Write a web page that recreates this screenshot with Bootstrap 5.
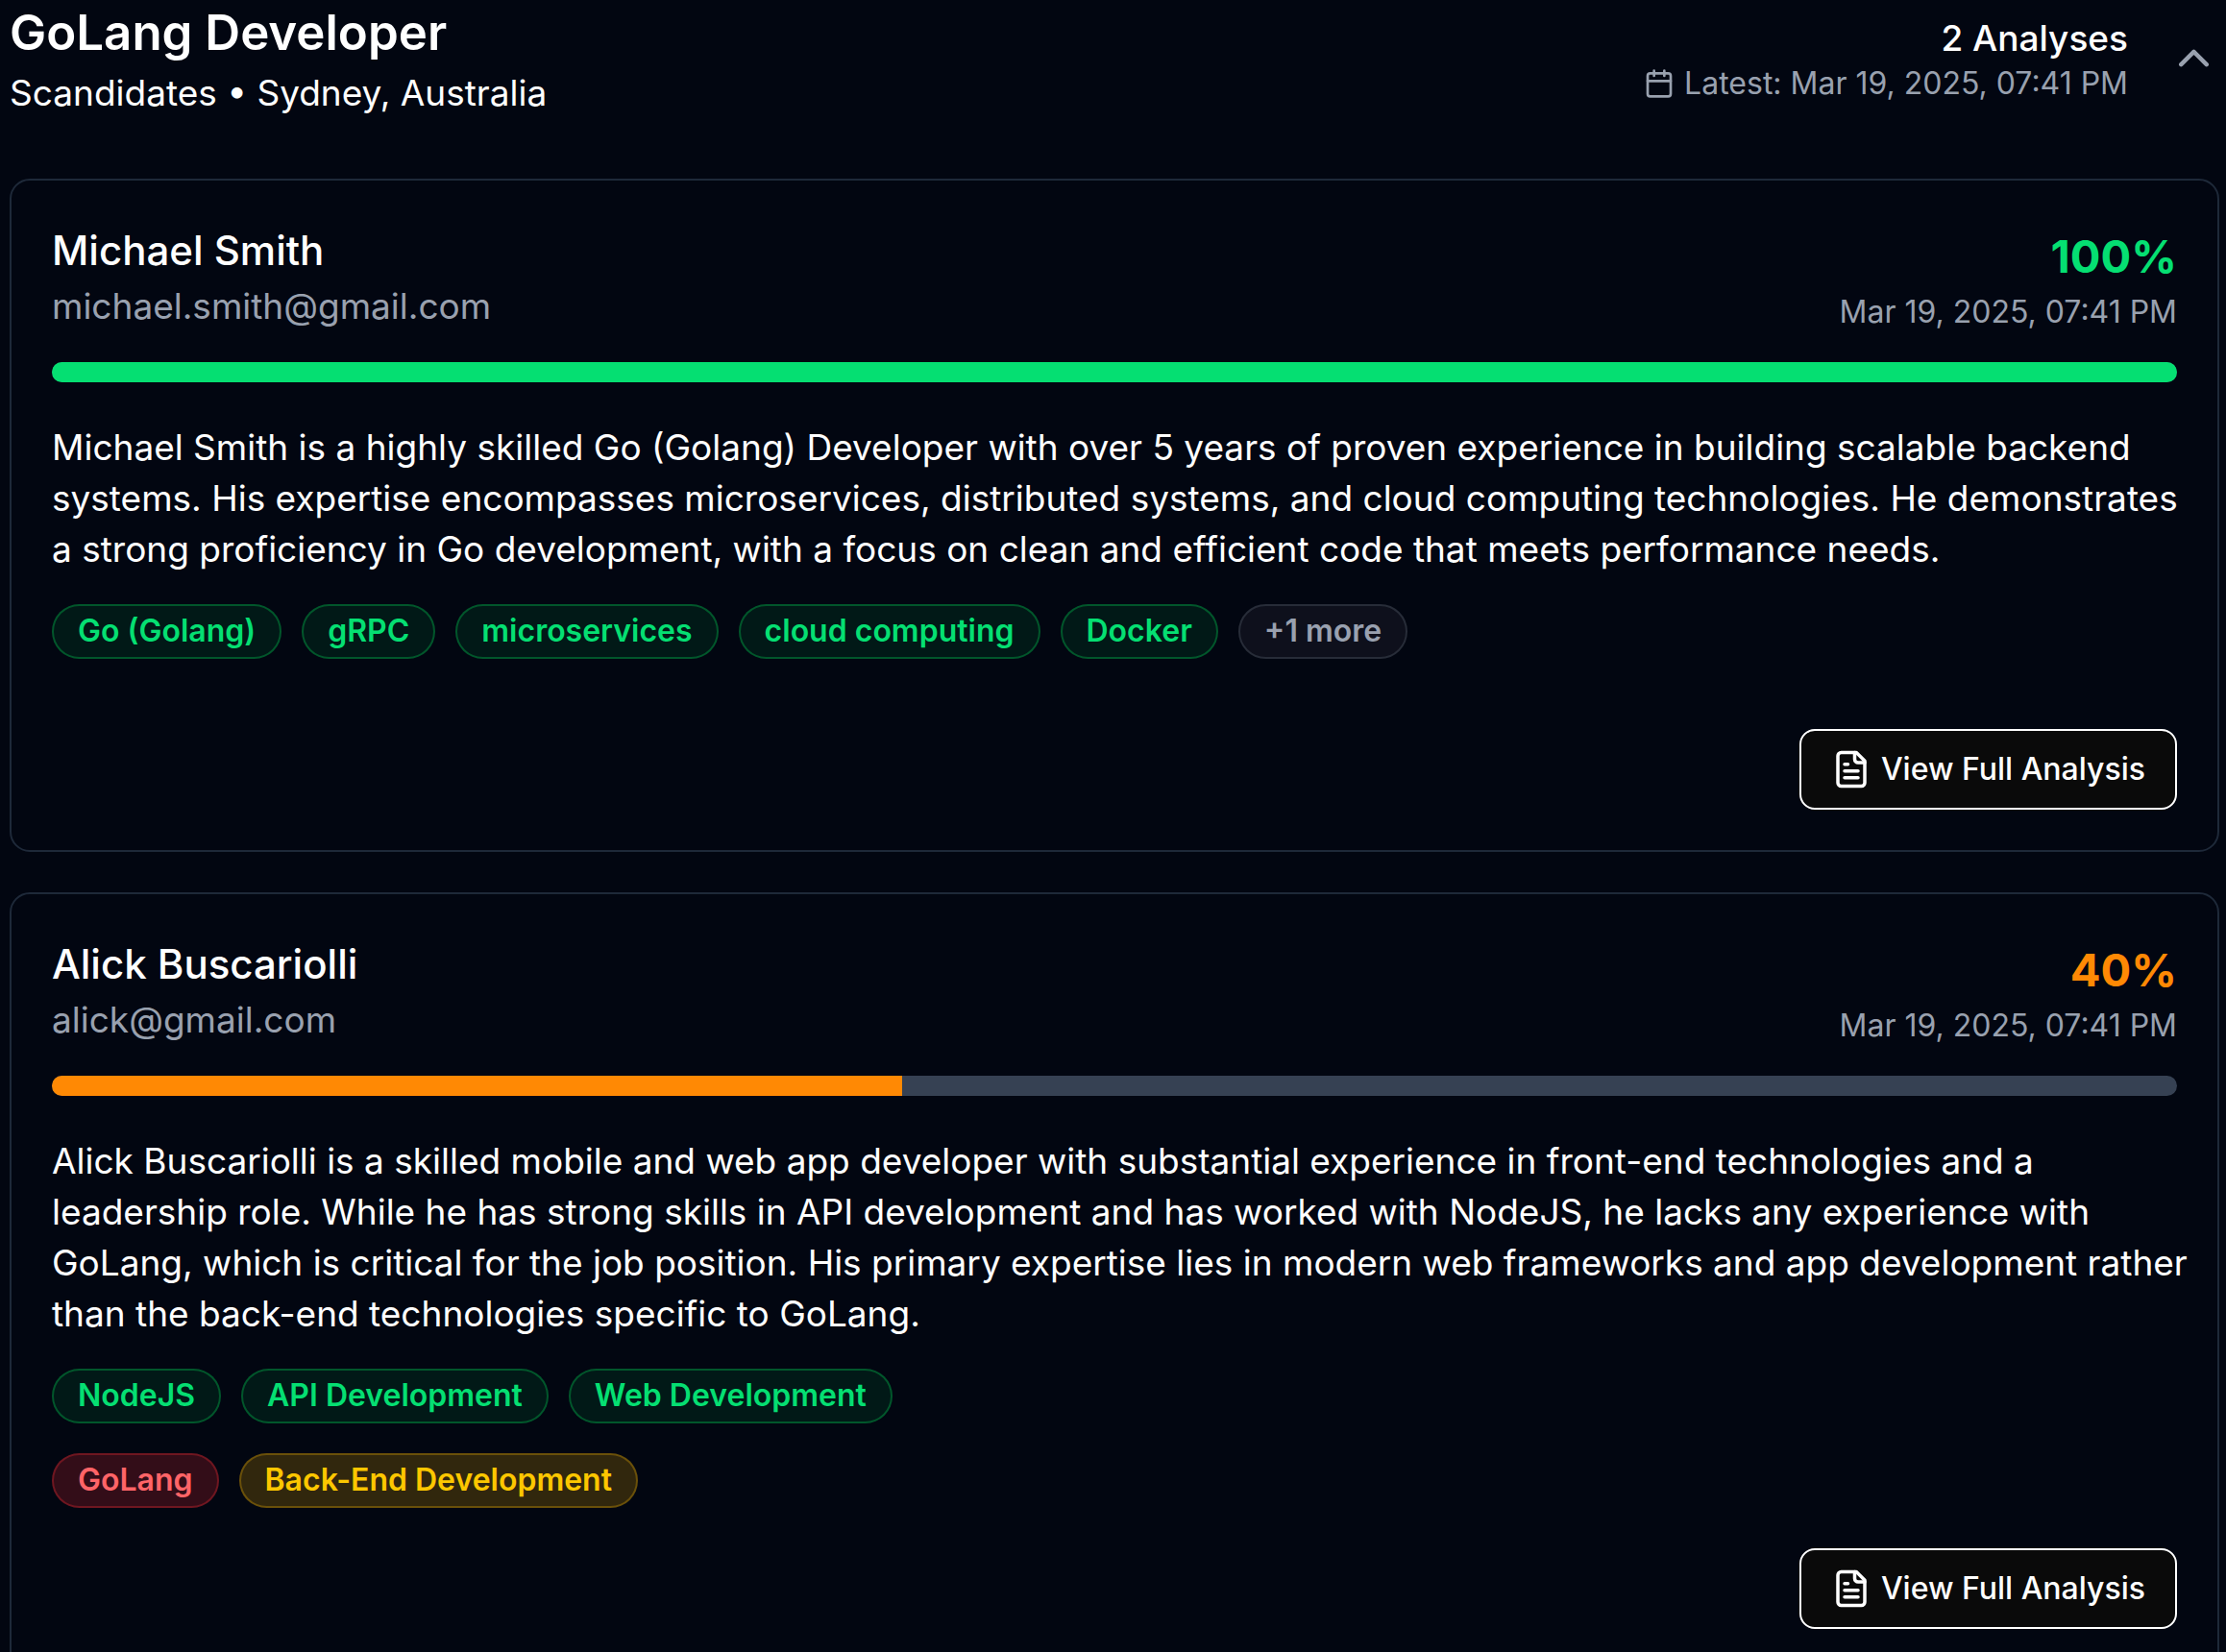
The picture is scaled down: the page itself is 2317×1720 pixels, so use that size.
<!DOCTYPE html>
<html lang="en" data-bs-theme="dark">
<head>
<meta charset="utf-8">
<meta name="viewport" content="width=device-width, initial-scale=1">
<title>GoLang Developer</title>
<link href="https://cdn.jsdelivr.net/npm/bootstrap@5.3.0/dist/css/bootstrap.min.css" rel="stylesheet">
<style>
  :root { --ink-muted: #99a1af; --line: #1e2939; --good: #05df72; --warn: #ff8904; }
  body { background: #020611; color: #fff; font-family: Inter, "Liberation Sans", sans-serif; font-size: 37px; line-height: 53px; }
  .page { padding: 0 7px 0 10px; }
  .job-head { margin: -3px 0 63px; }
  .job-title { font-size: 51px; line-height: 73px; font-weight: 600; }
  .muted { color: var(--ink-muted); }
  .fine { font-size: 32px; line-height: 42px; }
  .gap-fine { gap: 10px; }
  .gap-wide { gap: 42px; }
  .toggle { color: var(--ink-muted); line-height: 0; }
  .icon { fill: none; stroke: currentColor; stroke-width: 2; stroke-linecap: round; stroke-linejoin: round; flex: none; }
  .candidate { --bs-card-bg: transparent; --bs-card-color: #fff; border: 2px solid var(--line); border-radius: 21px; padding: 42px; }
  .person { font-size: 42px; line-height: 62px; font-weight: 500; }
  .score { font-size: 47px; line-height: 74px; font-weight: 700; }
  .score-good { color: var(--good); }
  .score-warn { color: var(--warn); }
  .match { height: 21px; border-radius: 11px; margin: 31px 0 41px; --bs-progress-bg: #364153; }
  .match .bar-good { background: var(--good); }
  .match .bar-warn { background: var(--warn); }
  .summary { margin: 0 -16px 31px 0; }
  .skills { gap: 31px; margin-bottom: 42px; }
  .skill-row { gap: 21px; }
  .skill { border: 2px solid; border-radius: 29px; padding: 5px 25px 6px; font-weight: 600; }
  .skill-good { color: var(--good); background: rgba(0, 201, 80, .1); border-color: rgba(0, 201, 80, .35); }
  .skill-bad { color: #ff6467; background: rgba(251, 44, 54, .2); border-color: rgba(251, 44, 54, .3); }
  .skill-part { color: #fdc700; background: rgba(240, 177, 0, .2); border-color: rgba(240, 177, 0, .3); }
  .skill-more { color: var(--ink-muted); background: #0e101c; border-color: #272c38; }
  .btn-view { --bs-btn-color: #fff; --bs-btn-bg: #0a0a0a; --bs-btn-border-color: #fff; --bs-btn-hover-color: #fff; --bs-btn-hover-bg: #262626; --bs-btn-hover-border-color: #fff; border-width: 2px; border-radius: 16px; padding: 19px 31px; font-weight: 500; }
</style>
</head>
<body>
<main class="page vh-100 overflow-hidden">
  <header class="job-head d-flex justify-content-between align-items-center">
    <div>
      <h1 class="job-title mb-0">GoLang Developer</h1>
      <p class="mb-0">Scandidates • Sydney, Australia</p>
    </div>
    <div class="d-flex align-items-center gap-wide">
      <div class="text-end">
        <div class="fw-medium">2 Analyses</div>
        <div class="fine muted d-flex align-items-center gap-fine">
          <svg class="icon" width="32" height="32" viewBox="0 0 24 24" aria-hidden="true"><path d="M8 2v4M16 2v4M3 10h18"/><rect x="3" y="4" width="18" height="18" rx="2"/></svg>
          <span>Latest: Mar 19, 2025, 07:41 PM</span>
        </div>
      </div>
      <button type="button" class="toggle btn p-0 border-0" aria-label="Collapse analyses" aria-expanded="true">
        <svg class="icon" width="53" height="53" viewBox="0 0 24 24" aria-hidden="true"><path d="m18 15-6-6-6 6"/></svg>
      </button>
    </div>
  </header>

  <section class="d-flex flex-column gap-wide">
    <article class="candidate card">
      <div class="d-flex justify-content-between">
        <div>
          <h2 class="person mb-0">Michael Smith</h2>
          <p class="muted mb-0">michael.smith@gmail.com</p>
        </div>
        <div class="text-end">
          <div class="score score-good">100%</div>
          <div class="fine muted">Mar 19, 2025, 07:41 PM</div>
        </div>
      </div>
      <div class="match progress" role="progressbar" aria-label="Match score" aria-valuenow="100" aria-valuemin="0" aria-valuemax="100">
        <div class="progress-bar bar-good" style="width: 100%"></div>
      </div>
      <p class="summary">Michael Smith is a highly skilled Go (Golang) Developer with over 5 years of proven experience in building scalable backend systems. His expertise encompasses microservices, distributed systems, and cloud computing technologies. He demonstrates a strong proficiency in Go development, with a focus on clean and efficient code that meets performance needs.</p>
      <div class="skills d-flex flex-column">
        <div class="skill-row d-flex flex-wrap">
          <span class="skill fine skill-good">Go (Golang)</span>
          <span class="skill fine skill-good">gRPC</span>
          <span class="skill fine skill-good">microservices</span>
          <span class="skill fine skill-good">cloud computing</span>
          <span class="skill fine skill-good">Docker</span>
          <span class="skill fine skill-more">+1 more</span>
        </div>
        <div class="skill-row d-flex flex-wrap"></div>
      </div>
      <div class="d-flex justify-content-end">
        <button type="button" class="btn btn-view fine d-flex align-items-center gap-fine">
          <svg class="icon" width="42" height="42" viewBox="0 0 24 24" aria-hidden="true"><path d="M15 2H6a2 2 0 0 0-2 2v16a2 2 0 0 0 2 2h12a2 2 0 0 0 2-2V7Z"/><path d="M14 2v4a2 2 0 0 0 2 2h4M10 9H8M16 13H8M16 17H8"/></svg>
          View Full Analysis
        </button>
      </div>
    </article>

    <article class="candidate card">
      <div class="d-flex justify-content-between">
        <div>
          <h2 class="person mb-0">Alick Buscariolli</h2>
          <p class="muted mb-0">alick@gmail.com</p>
        </div>
        <div class="text-end">
          <div class="score score-warn">40%</div>
          <div class="fine muted">Mar 19, 2025, 07:41 PM</div>
        </div>
      </div>
      <div class="match progress" role="progressbar" aria-label="Match score" aria-valuenow="40" aria-valuemin="0" aria-valuemax="100">
        <div class="progress-bar bar-warn" style="width: 40%"></div>
      </div>
      <p class="summary">Alick Buscariolli is a skilled mobile and web app developer with substantial experience in front-end technologies and a leadership role. While he has strong skills in API development and has worked with NodeJS, he lacks any experience with GoLang, which is critical for the job position. His primary expertise lies in modern web frameworks and app development rather than the back-end technologies specific to GoLang.</p>
      <div class="skills d-flex flex-column">
        <div class="skill-row d-flex flex-wrap">
          <span class="skill fine skill-good">NodeJS</span>
          <span class="skill fine skill-good">API Development</span>
          <span class="skill fine skill-good">Web Development</span>
        </div>
        <div class="skill-row d-flex flex-wrap">
          <span class="skill fine skill-bad">GoLang</span>
          <span class="skill fine skill-part">Back-End Development</span>
        </div>
      </div>
      <div class="d-flex justify-content-end">
        <button type="button" class="btn btn-view fine d-flex align-items-center gap-fine">
          <svg class="icon" width="42" height="42" viewBox="0 0 24 24" aria-hidden="true"><path d="M15 2H6a2 2 0 0 0-2 2v16a2 2 0 0 0 2 2h12a2 2 0 0 0 2-2V7Z"/><path d="M14 2v4a2 2 0 0 0 2 2h4M10 9H8M16 13H8M16 17H8"/></svg>
          View Full Analysis
        </button>
      </div>
    </article>
  </section>
</main>
<script src="https://cdn.jsdelivr.net/npm/bootstrap@5.3.0/dist/js/bootstrap.bundle.min.js"></script>
</body>
</html>
